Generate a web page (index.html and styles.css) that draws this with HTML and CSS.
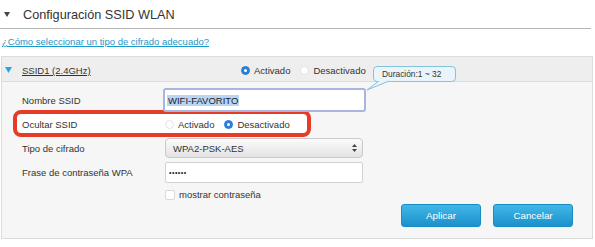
FILE: index.html
```html
<!DOCTYPE html>
<html lang="es">
<head>
<meta charset="utf-8">
<link rel="stylesheet" href="styles.css">
</head>
<body>
<div class="page">
  <div class="title">
    <svg class="title-tri" width="6" height="5" viewBox="0 0 6 5"><polygon points="0,0 6,0 3,5" fill="#444"/></svg>
    <span class="title-text">Configuración SSID WLAN</span>
  </div>
  <div class="link-row"><a class="link" href="#">¿Cómo seleccionar un tipo de cifrado adecuado?</a></div>

  <div class="panel">
    <div class="panel-head">
      <div class="head-title">
        <svg class="head-tri" width="7" height="6" viewBox="0 0 7 6"><polygon points="0,0 7,0 3.5,6" fill="#2ba6dc"/></svg>
        <span class="ssid-name">SSID1 (2.4GHz)</span>
      </div>
      <div class="radios">
        <span class="radio on"></span><span class="radio-label">Activado</span>
        <span class="radio"></span><span class="radio-label">Desactivado</span>
      </div>
    </div>
    <div class="tooltip">Duración:1 ~ 32
      <svg class="tail" width="26" height="12" viewBox="0 0 26 12"><polygon points="12,0 24,0 24,1 1,10 12,1" fill="#eaf5fb"/><polyline points="13,1 1,10 23,1" fill="none" stroke="#86c3da" stroke-width="1"/></svg>
    </div>
    <div class="panel-body">
      <div class="row">
        <div class="label">Nombre SSID</div>
        <div class="field"><div class="input focus"><span class="sel">WIFI-FAVORITO</span></div></div>
      </div>
      <div class="row marked">
        <div class="label">Ocultar SSID</div>
        <div class="field radios">
          <span class="radio"></span><span class="radio-label">Activado</span>
          <span class="radio on"></span><span class="radio-label">Desactivado</span>
        </div>
      </div>
      <div class="row">
        <div class="label">Tipo de cifrado</div>
        <div class="field"><div class="select"><span>WPA2-PSK-AES</span>
          <svg width="5" height="8" viewBox="0 0 5 8"><polygon points="0,3 5,3 2.5,0" fill="#444"/><polygon points="0,5 5,5 2.5,8" fill="#444"/></svg></div></div>
      </div>
      <div class="row">
        <div class="label">Frase de contraseña WPA</div>
        <div class="field"><div class="input pass">••••••</div></div>
      </div>
      <div class="row check-row">
        <div class="label"></div>
        <div class="field"><span class="checkbox"></span><span class="check-label">mostrar contraseña</span></div>
      </div>
      <div class="buttons">
        <button class="btn">Aplicar</button>
        <button class="btn">Cancelar</button>
      </div>
    </div>
  </div>
</div>
</body>
</html>
```

FILE: styles.css
```css
*, *::before, *::after { box-sizing: border-box; }
body {
  margin: 0;
  background: #ffffff;
  font-family: "Liberation Sans", Arial, sans-serif;
  color: #333;
  font-size: 9.5px;
}
.page { width: 595px; position: relative; }
.title {
  width: 591px;
  height: 29px;
  border-bottom: 1px solid #b3b3b3;
  display: flex;
  align-items: center;
  padding-left: 4px;
  padding-top: 1px;
}
.title-tri { margin-right: 13px; }
.title-text { font-size: 12.7px; color: #333; }
.link-row { height: 27px; padding: 7px 0 0 2px; line-height: 12px; }
.link { color: #1c98c8; font-size: 9.5px; text-decoration: underline; }

.panel {
  position: relative;
  margin-left: 1px;
  width: 592px;
  border: 1px solid #dcdcdc;
  background: #f6f6f6;
}
.panel-head {
  height: 25px;
  background: #eeeeee;
  border-bottom: 1px solid #dcdcdc;
  display: flex;
  align-items: center;
  padding-top: 3px;
}
.head-title { width: 239px; display: flex; align-items: center; padding-left: 3px; }
.head-tri { margin-right: 10px; margin-top: -2px; }
.ssid-name { text-decoration: underline; color: #333; }
.radios { display: flex; align-items: center; }
.radio {
  width: 9px; height: 9px; border-radius: 50%;
  background: #fff; border: 1px solid #e2e2e2;
  margin-right: 4px;
  position: relative;
}
.radio.on { background: #2b7fd8; border-color: #2b7fd8; }
.radio.on::after {
  content: ""; position: absolute; left: 2px; top: 2px;
  width: 3px; height: 3px; border-radius: 50%; background: #fff;
}
.radio-label { margin-right: 10px; }

.tooltip {
  position: absolute;
  left: 371px; top: 9px;
  width: 83px; height: 16px;
  background: #eaf5fb;
  border: 1px solid #86c3da;
  border-radius: 4px;
  font-size: 8.4px;
  line-height: 14px;
  padding-left: 8px;
  color: #333;
}
.tail { position: absolute; left: -8px; top: 13px; }

.panel-body { padding: 6px 0 11px 20px; }
.row {
  display: grid;
  grid-template-columns: 143px 1fr;
  align-items: center;
  height: 24px;
  position: relative;
}
.row > * { position: relative; z-index: 1; }
.marked::before {
  content: "";
  position: absolute;
  left: -9px; top: -2px;
  width: 298px; height: 27px;
  border: 4px solid #e63b26;
  border-radius: 8px;
  background: #fff;
  z-index: 0;
}
.field { display: flex; align-items: center; }
.input {
  width: 198px; height: 21px;
  background: #fff;
  border: 1px solid #d2d2d2;
  border-radius: 2px;
  display: flex; align-items: center;
  padding-left: 3px;
}
.input.focus {
  margin-left: -2px;
  width: 203px; height: 24px;
  border: 2px solid #a9b5de;
  border-radius: 3px;
  padding-left: 2px;
  color: #222;
}
.sel { background: #b9d5f3; line-height: 11px; padding: 0 1px; }
.input.pass { font-size: 7px; letter-spacing: 0.5px; color: #222; }
.select {
  width: 198px; height: 20px;
  border: 1px solid #cacaca;
  border-radius: 4px;
  background: linear-gradient(#fbfbfb, #e3e3e3);
  display: flex; align-items: center; justify-content: space-between;
  padding: 0 5px 0 7px;
  color: #333;
}
.check-row { height: 21px; }
.checkbox {
  width: 10px; height: 10px;
  background: #fff; border: 1px solid #d8d8d8; border-radius: 2px;
  margin-right: 4px;
}
.buttons {
  display: flex; justify-content: flex-end; gap: 12px;
  padding-right: 19px;
  margin-top: -1px;
}
.btn {
  width: 80px; height: 23px;
  border: 1px solid #1b8bc4;
  border-radius: 3px;
  background: linear-gradient(#41b7e8, #1a91cb);
  color: #fff;
  font-family: "Liberation Sans", Arial, sans-serif;
  font-size: 9.8px;
  padding: 0;
}
```
